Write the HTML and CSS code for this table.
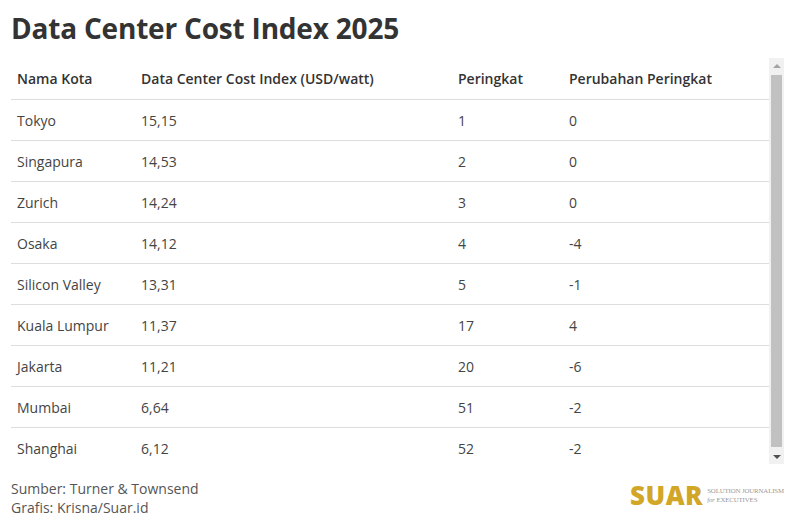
FILE: index.html
```html
<!DOCTYPE html>
<html lang="id">
<head>
<meta charset="utf-8">
<title>Data Center Cost Index 2025</title>
<link rel="stylesheet" href="styles.css">
</head>
<body>
<div class="page">
  <h1 class="title">Data Center Cost Index 2025</h1>
  <div class="table-wrap">
    <div class="table-view">
      <table class="data">
        <thead>
          <tr><th class="c1">Nama Kota</th><th class="c2">Data Center Cost Index (USD/watt)</th><th class="c3">Peringkat</th><th class="c4">Perubahan Peringkat</th></tr>
        </thead>
        <tbody>
          <tr><td>Tokyo</td><td>15,15</td><td>1</td><td>0</td></tr>
          <tr><td>Singapura</td><td>14,53</td><td>2</td><td>0</td></tr>
          <tr><td>Zurich</td><td>14,24</td><td>3</td><td>0</td></tr>
          <tr><td>Osaka</td><td>14,12</td><td>4</td><td>-4</td></tr>
          <tr><td>Silicon Valley</td><td>13,31</td><td>5</td><td>-1</td></tr>
          <tr><td>Kuala Lumpur</td><td>11,37</td><td>17</td><td>4</td></tr>
          <tr><td>Jakarta</td><td>11,21</td><td>20</td><td>-6</td></tr>
          <tr><td>Mumbai</td><td>6,64</td><td>51</td><td>-2</td></tr>
          <tr><td>Shanghai</td><td>6,12</td><td>52</td><td>-2</td></tr>
        </tbody>
      </table>
    </div>
    <div class="scrollbar" aria-hidden="true">
      <div class="sb-btn"><span class="arrow-up"></span></div>
      <div class="sb-track"><div class="sb-thumb"></div></div>
      <div class="sb-btn"><span class="arrow-down"></span></div>
    </div>
  </div>
  <div class="footer">
    <div class="source">
      <div>Sumber: Turner &amp; Townsend</div>
      <div>Grafis: Krisna/Suar.id</div>
    </div>
    <div class="logo">
      <span class="logo-mark">SUAR</span>
      <span class="logo-tag"><span>SOLUTION JOURNALISM</span><span><i>for</i> EXECUTIVES</span></span>
    </div>
  </div>
</div>
</body>
</html>
```
FILE: styles.css
```css
html, body { margin: 0; padding: 0; background: #fff; }
body { font-family: "Open Sans", "Noto Sans", sans-serif; color: #444; }
.page { padding: 0 11px; }
.title {
  margin: 0;
  padding-top: 10px;
  height: 58px;
  box-sizing: border-box;
  font-size: 28px;
  line-height: 36px;
  font-weight: 700;
  color: #333;
  letter-spacing: -0.2px;
}
.table-wrap {
  display: flex;
  height: 406px;
  width: 773px;
}
.table-view { flex: 1; overflow: hidden; }
.data { border-collapse: collapse; width: 100%; table-layout: fixed; font-size: 14px; }
.data th, .data td {
  text-align: left;
  padding: 0 6px;
  height: 40px;
  border-bottom: 1px solid #ddd;
  white-space: nowrap;
}
.data th { font-weight: 600; color: #333; height: 41px; }
.data td { color: #444; }
.c1 { width: 112px; }
.c2 { width: 305px; }
.c3 { width: 99px; }
.scrollbar {
  width: 15px;
  background: #f1f1f1;
  display: flex;
  flex-direction: column;
}
.sb-btn { height: 15px; display: flex; align-items: center; justify-content: center; }
.sb-track { flex: 1; padding: 2px 2px; display: flex; }
.sb-thumb { flex: 1; background: #c1c1c1; }
.arrow-up { width: 0; height: 0; border-left: 4px solid transparent; border-right: 4px solid transparent; border-bottom: 4px solid #a3a3a3; }
.arrow-down { width: 0; height: 0; border-left: 4px solid transparent; border-right: 4px solid transparent; border-top: 4px solid #505050; }
.footer { display: flex; justify-content: space-between; align-items: flex-start; padding-top: 15px; }
.source { font-size: 14px; line-height: 19px; color: #555; }
.logo { display: flex; align-items: center; gap: 4px; padding-top: 4px; margin-right: 0; }
.logo-mark { font-family: "Open Sans", sans-serif; font-weight: 800; font-size: 26px; line-height: 24px; color: #d2a728; letter-spacing: 0.5px; }
.logo-tag { display: flex; flex-direction: column; font-family: "Liberation Serif", serif; font-size: 6.8px; line-height: 9px; color: #999; letter-spacing: -0.1px; }
```
